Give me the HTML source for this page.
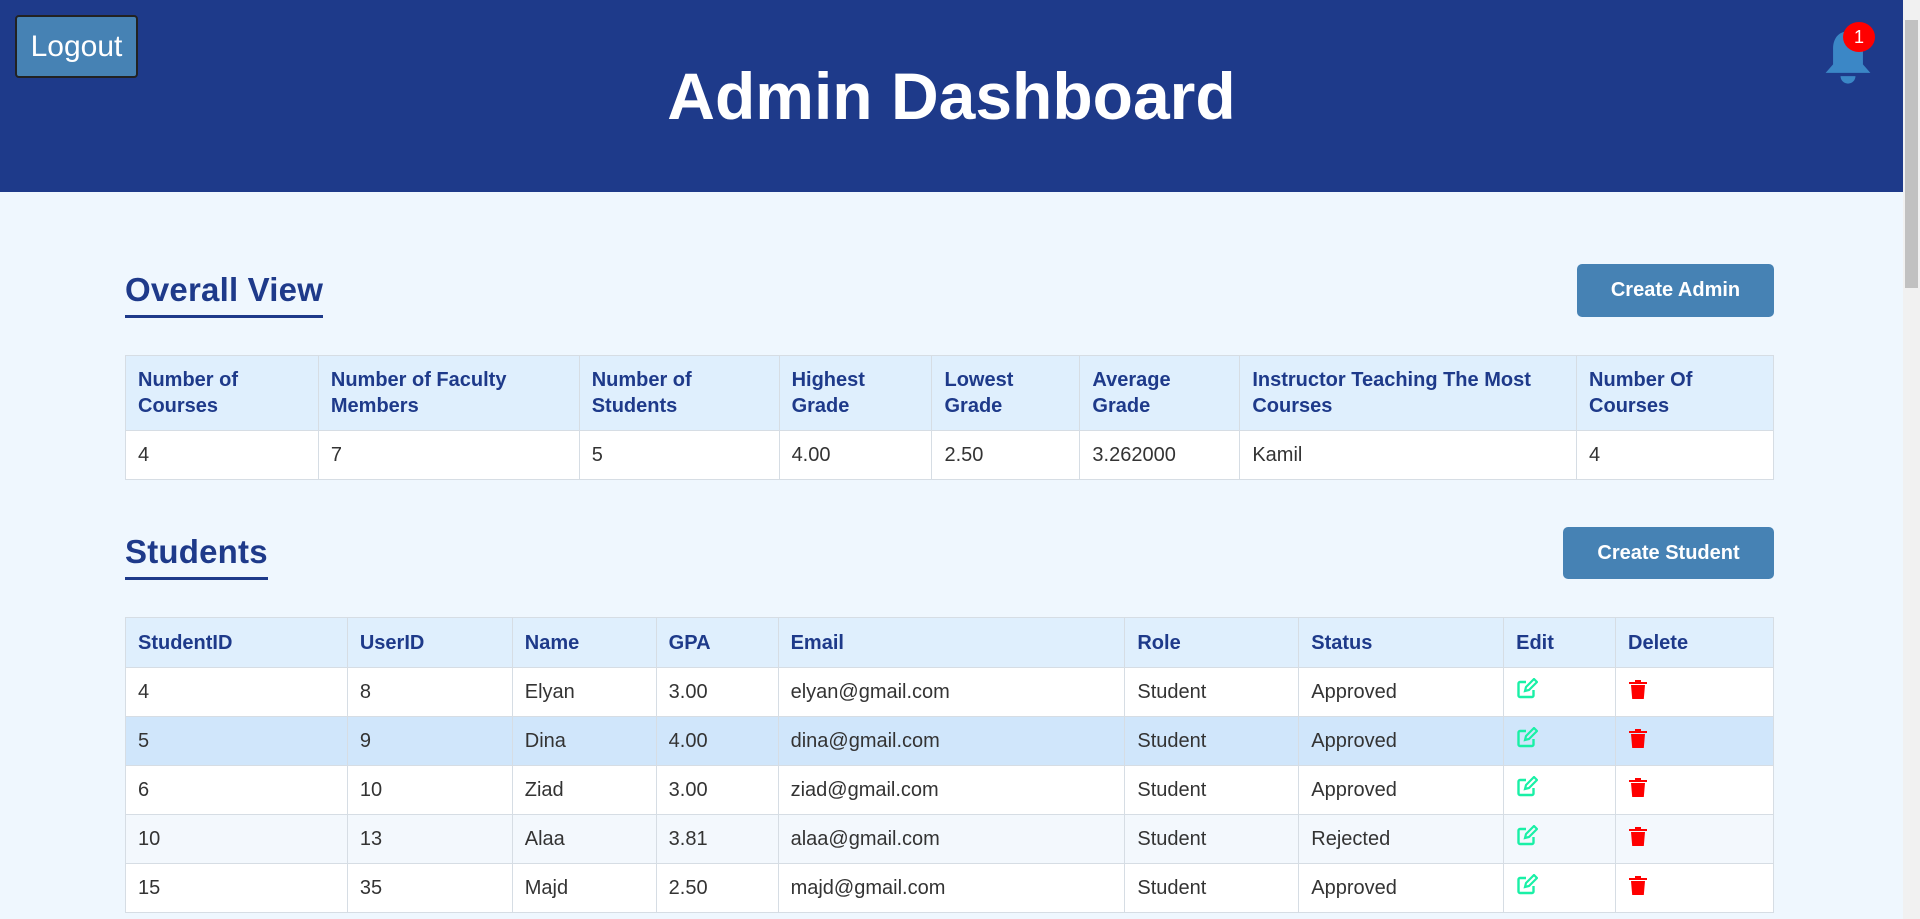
<!DOCTYPE html>
<html><head><meta charset="utf-8"><style>
*{box-sizing:border-box;margin:0;padding:0}
body{width:1920px;height:919px;overflow:hidden;background:#eff7fe;font-family:"Liberation Sans",Arial,sans-serif;position:relative}
.hdr{position:absolute;left:0;top:0;width:1903px;height:192px;background:#1e3a8a}
.logout{position:absolute;left:15px;top:15px;width:123px;height:63px;background:#4682b4;border:2px solid #222;border-radius:4px;color:#fff;font-size:30px;line-height:59px;text-align:center}
h1{position:absolute;left:0;width:1903px;top:58px;text-align:center;color:#fff;font-size:66px;font-weight:bold}
.bell{position:absolute;left:1818px;top:26px}
.badge{position:absolute;left:1843px;top:22px;width:32px;height:30px;border-radius:50%;background:#f00;color:#fff;font-size:18px;text-align:center;line-height:30px}
.sb{position:absolute;right:0;top:0;width:17px;height:919px;background:#f1f1f1}
.thumb{position:absolute;right:2px;top:20px;width:13px;height:268px;background:#c1c1c1}
h2{position:absolute;left:125px;color:#1e3a8a;font-size:33px;font-weight:bold;border-bottom:3px solid #1e3a8a;padding-bottom:6px;letter-spacing:0.2px}
.btn{position:absolute;background:#4682b4;color:#fff;font-size:20px;font-weight:bold;border-radius:5px;text-align:center}
table{position:absolute;left:125px;width:1649px;border-collapse:collapse;font-size:20px;color:#333}
th{background:#dfeffd;color:#1e3a8a;text-align:left;font-weight:bold;padding:0 12px;border:1px solid #d6dde4;line-height:26px}
td{padding:0 12px;border:1px solid #d6dde4;background:#fff}
tr.h td{background:#d0e6fb}
tr.a td{background:#f3f8fd}
</style></head><body>
<div class="hdr">
<div class="logout">Logout</div>
<h1>Admin Dashboard</h1>
<svg class="bell" width="60" height="64" viewBox="0 0 56 60"><path d="M28 5c-9 0-14 7-14 16v15l-7 8h42l-7-8V21c0-9-5-16-14-16z" fill="#3b87c6"/><path d="M21 47a7 7 0 0 0 14 0z" fill="#3b87c6"/></svg>
<div class="badge">1</div>
</div>
<div class="sb"><div class="thumb"></div></div>

<h2 style="top:271px">Overall View</h2>
<div class="btn" style="left:1577px;top:264px;width:197px;height:53px;line-height:53px">Create Admin</div>
<table style="top:355px">
<colgroup><col style="width:193px"><col style="width:261px"><col style="width:200px"><col style="width:153px"><col style="width:148px"><col style="width:160px"><col style="width:337px"><col style="width:197px"></colgroup>
<tr style="height:75px"><th>Number of<br>Courses</th><th>Number of Faculty<br>Members</th><th>Number of<br>Students</th><th>Highest<br>Grade</th><th>Lowest<br>Grade</th><th>Average<br>Grade</th><th>Instructor Teaching The Most<br>Courses</th><th>Number Of<br>Courses</th></tr>
<tr style="height:49px"><td>4</td><td>7</td><td>5</td><td>4.00</td><td>2.50</td><td>3.262000</td><td>Kamil</td><td>4</td></tr>
</table>

<h2 style="top:533px">Students</h2>
<div class="btn" style="left:1563px;top:527px;width:211px;height:52px;line-height:52px">Create Student</div>
<table style="top:617px">
<colgroup><col style="width:222px"><col style="width:165px"><col style="width:144px"><col style="width:122px"><col style="width:347px"><col style="width:174px"><col style="width:205px"><col style="width:112px"><col style="width:158px"></colgroup>
<tr style="height:50px"><th>StudentID</th><th>UserID</th><th>Name</th><th>GPA</th><th>Email</th><th>Role</th><th>Status</th><th>Edit</th><th>Delete</th></tr>
<tr style="height:49px"><td>4</td><td>8</td><td>Elyan</td><td>3.00</td><td>elyan@gmail.com</td><td>Student</td><td>Approved</td><td><svg width="22" height="22" viewBox="0 0 22 22"><path d="M10 4H4a1.5 1.5 0 0 0-1.5 1.5v12A1.5 1.5 0 0 0 4 19h12a1.5 1.5 0 0 0 1.5-1.5V12" fill="none" stroke="#19f0a6" stroke-width="2.4"/><path d="M9 13l1-4 8-8 3 3-8 8z" fill="none" stroke="#19f0a6" stroke-width="2.2"/></svg></td><td><svg width="20" height="22" viewBox="0 0 20 22"><path d="M1 4h18v2H1zM7 2h6v2H7zM3 7h14l-1.2 14H4.2z" fill="#f00"/></svg></td></tr>
<tr class="h" style="height:49px"><td>5</td><td>9</td><td>Dina</td><td>4.00</td><td>dina@gmail.com</td><td>Student</td><td>Approved</td><td><svg width="22" height="22" viewBox="0 0 22 22"><path d="M10 4H4a1.5 1.5 0 0 0-1.5 1.5v12A1.5 1.5 0 0 0 4 19h12a1.5 1.5 0 0 0 1.5-1.5V12" fill="none" stroke="#19f0a6" stroke-width="2.4"/><path d="M9 13l1-4 8-8 3 3-8 8z" fill="none" stroke="#19f0a6" stroke-width="2.2"/></svg></td><td><svg width="20" height="22" viewBox="0 0 20 22"><path d="M1 4h18v2H1zM7 2h6v2H7zM3 7h14l-1.2 14H4.2z" fill="#f00"/></svg></td></tr>
<tr style="height:49px"><td>6</td><td>10</td><td>Ziad</td><td>3.00</td><td>ziad@gmail.com</td><td>Student</td><td>Approved</td><td><svg width="22" height="22" viewBox="0 0 22 22"><path d="M10 4H4a1.5 1.5 0 0 0-1.5 1.5v12A1.5 1.5 0 0 0 4 19h12a1.5 1.5 0 0 0 1.5-1.5V12" fill="none" stroke="#19f0a6" stroke-width="2.4"/><path d="M9 13l1-4 8-8 3 3-8 8z" fill="none" stroke="#19f0a6" stroke-width="2.2"/></svg></td><td><svg width="20" height="22" viewBox="0 0 20 22"><path d="M1 4h18v2H1zM7 2h6v2H7zM3 7h14l-1.2 14H4.2z" fill="#f00"/></svg></td></tr>
<tr class="a" style="height:49px"><td>10</td><td>13</td><td>Alaa</td><td>3.81</td><td>alaa@gmail.com</td><td>Student</td><td>Rejected</td><td><svg width="22" height="22" viewBox="0 0 22 22"><path d="M10 4H4a1.5 1.5 0 0 0-1.5 1.5v12A1.5 1.5 0 0 0 4 19h12a1.5 1.5 0 0 0 1.5-1.5V12" fill="none" stroke="#19f0a6" stroke-width="2.4"/><path d="M9 13l1-4 8-8 3 3-8 8z" fill="none" stroke="#19f0a6" stroke-width="2.2"/></svg></td><td><svg width="20" height="22" viewBox="0 0 20 22"><path d="M1 4h18v2H1zM7 2h6v2H7zM3 7h14l-1.2 14H4.2z" fill="#f00"/></svg></td></tr>
<tr style="height:49px"><td>15</td><td>35</td><td>Majd</td><td>2.50</td><td>majd@gmail.com</td><td>Student</td><td>Approved</td><td><svg width="22" height="22" viewBox="0 0 22 22"><path d="M10 4H4a1.5 1.5 0 0 0-1.5 1.5v12A1.5 1.5 0 0 0 4 19h12a1.5 1.5 0 0 0 1.5-1.5V12" fill="none" stroke="#19f0a6" stroke-width="2.4"/><path d="M9 13l1-4 8-8 3 3-8 8z" fill="none" stroke="#19f0a6" stroke-width="2.2"/></svg></td><td><svg width="20" height="22" viewBox="0 0 20 22"><path d="M1 4h18v2H1zM7 2h6v2H7zM3 7h14l-1.2 14H4.2z" fill="#f00"/></svg></td></tr>
</table>
</body></html>
